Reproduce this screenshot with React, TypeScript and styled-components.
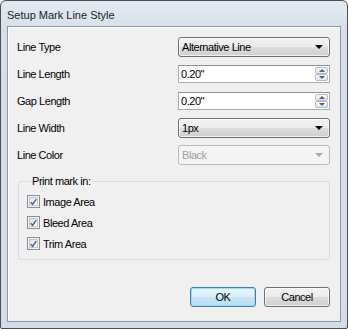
import React from "react";
import styled, { createGlobalStyle } from "styled-components";

const Global = createGlobalStyle`
  html, body { margin: 0; padding: 0; background: #ffffff; }
  body { font-family: "Liberation Sans", Arial, sans-serif; font-size: 11px; letter-spacing: -0.45px; color: #000; }
  * { box-sizing: border-box; }
`;

const Frame = styled.div`
  width: 348px;
  height: 329px;
  display: flex;
  flex-direction: column;
  padding: 0 6px 6px 6px;
  border: 1px solid #4a4f55;
  border-radius: 6px 6px 2px 2px;
  background: linear-gradient(#e4eaf2, #d6dfea 30px, #d3dce7);
`;

const TitleBar = styled.div`
  height: 25px;
  display: flex;
  align-items: center;
  padding-top: 2px;
  font-size: 11px;
  letter-spacing: 0;
  color: #1b1b1b;
`;

const Client = styled.div`
  flex: 1;
  display: flex;
  flex-direction: column;
  background: #f0f0f0;
  border: 1px solid #8b97a5;
  box-shadow: inset 1px 1px 0 #ffffff;
  padding: 6px 10px 14px 9px;
`;

const Form = styled.div`
  display: grid;
  grid-template-columns: 1fr 152px;
  grid-auto-rows: 27px;
  align-items: center;
`;

const Label = styled.div``;

const SelectBox = styled.div<{ $disabled?: boolean }>`
  height: 20px;
  display: flex;
  align-items: center;
  justify-content: space-between;
  padding: 0 6px 0 3px;
  border: 1px solid ${(p) => (p.$disabled ? "#b8bcc0" : "#707070")};
  border-radius: 3px;
  color: ${(p) => (p.$disabled ? "#a0a0a0" : "#000")};
  background: ${(p) =>
    p.$disabled
      ? "#f4f4f4"
      : "linear-gradient(#f2f2f2 0%, #ebebeb 50%, #dddddd 50%, #cfcfcf 100%)"};
  box-shadow: ${(p) => (p.$disabled ? "none" : "inset 0 0 0 1px rgba(255,255,255,0.7)")};
`;

const Arrow = styled.span<{ $disabled?: boolean }>`
  width: 0;
  height: 0;
  border-left: 4px solid transparent;
  border-right: 4px solid transparent;
  border-top: 4px solid ${(p) => (p.$disabled ? "#a8a8a8" : "#000")};
`;

const SpinField = styled.div`
  height: 18px;
  display: flex;
  align-items: stretch;
  border: 1px solid #abadb3;
  border-top-color: #8e9198;
  background: #fff;
  padding: 1px;
`;

const SpinText = styled.div`
  flex: 1;
  display: flex;
  align-items: center;
  padding-left: 1px;
`;

const SpinButtons = styled.div`
  width: 13px;
  display: flex;
  flex-direction: column;
`;

const SpinBtn = styled.div`
  flex: 1;
  display: flex;
  align-items: center;
  justify-content: center;
  border: 1px solid #b5bcc5;
  border-radius: 2px;
  background: linear-gradient(#f7f8fa, #e3e7ec);
`;

const MiniArrow = styled.span<{ $down?: boolean }>`
  width: 0;
  height: 0;
  border-left: 3px solid transparent;
  border-right: 3px solid transparent;
  ${(p) =>
    p.$down ? "border-top: 3px solid #4d6185;" : "border-bottom: 3px solid #4d6185;"}
`;

const Group = styled.fieldset`
  margin: 7px 0 0 1px;
  padding: 8px 0 9px 8px;
  border: 1px solid #d5dfe5;
  border-radius: 3px;
  display: flex;
  flex-direction: column;
  gap: 8px;
  min-width: 0;
`;

const Legend = styled.legend`
  padding: 0 1px;
  margin-left: 4px;
`;

const CheckRow = styled.label`
  display: flex;
  align-items: center;
  gap: 3px;
  height: 13px;
`;

const Box = styled.span`
  width: 13px;
  height: 13px;
  border: 1px solid #8f8f8f;
  background: #f4f4f4;
  display: flex;
  align-items: center;
  justify-content: center;
  padding: 1px;
`;

const BoxInner = styled.span`
  width: 100%;
  height: 100%;
  border: 1px solid #c4c9d0;
  background: linear-gradient(135deg, #dfe3e8, #fbfbfb);
  display: flex;
  align-items: center;
  justify-content: center;
`;

const Spacer = styled.div`
  flex: 1;
`;

const ButtonRow = styled.div`
  display: flex;
  justify-content: flex-end;
  gap: 8px;
`;

const Button = styled.div<{ $default?: boolean }>`
  width: 66px;
  height: 20px;
  display: flex;
  align-items: center;
  justify-content: center;
  border-radius: 3px;
  border: 1px solid ${(p) => (p.$default ? "#3c7fb1" : "#707070")};
  background: ${(p) =>
    p.$default
      ? "linear-gradient(#e5f4fc 0%, #daeffa 50%, #c4e5f6 50%, #b9dff3 100%)"
      : "linear-gradient(#f2f2f2 0%, #ebebeb 50%, #dddddd 50%, #cfcfcf 100%)"};
  box-shadow: inset 0 0 0 1px ${(p) => (p.$default ? "#a6d6f2" : "rgba(255,255,255,0.7)")};
`;

const Check = () => (
  <svg width="8" height="8" viewBox="0 0 8 8">
    <path d="M0.8 4.2 L3 6.6 L7.2 0.8" fill="none" stroke="#4a5f97" strokeWidth="1.6" />
  </svg>
);

const Spin = ({ value }: { value: string }) => (
  <SpinField>
    <SpinText>{value}</SpinText>
    <SpinButtons>
      <SpinBtn>
        <MiniArrow />
      </SpinBtn>
      <SpinBtn>
        <MiniArrow $down />
      </SpinBtn>
    </SpinButtons>
  </SpinField>
);

const CheckItem = ({ label }: { label: string }) => (
  <CheckRow>
    <Box>
      <BoxInner>
        <Check />
      </BoxInner>
    </Box>
    {label}
  </CheckRow>
);

export default function App() {
  return (
    <>
      <Global />
      <Frame>
        <TitleBar>Setup Mark Line Style</TitleBar>
        <Client>
          <Form>
            <Label>Line Type</Label>
            <SelectBox>
              Alternative Line
              <Arrow />
            </SelectBox>
            <Label>Line Length</Label>
            <Spin value={'0.20"'} />
            <Label>Gap Length</Label>
            <Spin value={'0.20"'} />
            <Label>Line Width</Label>
            <SelectBox>
              1px
              <Arrow />
            </SelectBox>
            <Label>Line Color</Label>
            <SelectBox $disabled>
              Black
              <Arrow $disabled />
            </SelectBox>
          </Form>
          <Group>
            <Legend>Print mark in:</Legend>
            <CheckItem label="Image Area" />
            <CheckItem label="Bleed Area" />
            <CheckItem label="Trim Area" />
          </Group>
          <Spacer />
          <ButtonRow>
            <Button $default>OK</Button>
            <Button>Cancel</Button>
          </ButtonRow>
        </Client>
      </Frame>
    </>
  );
}
